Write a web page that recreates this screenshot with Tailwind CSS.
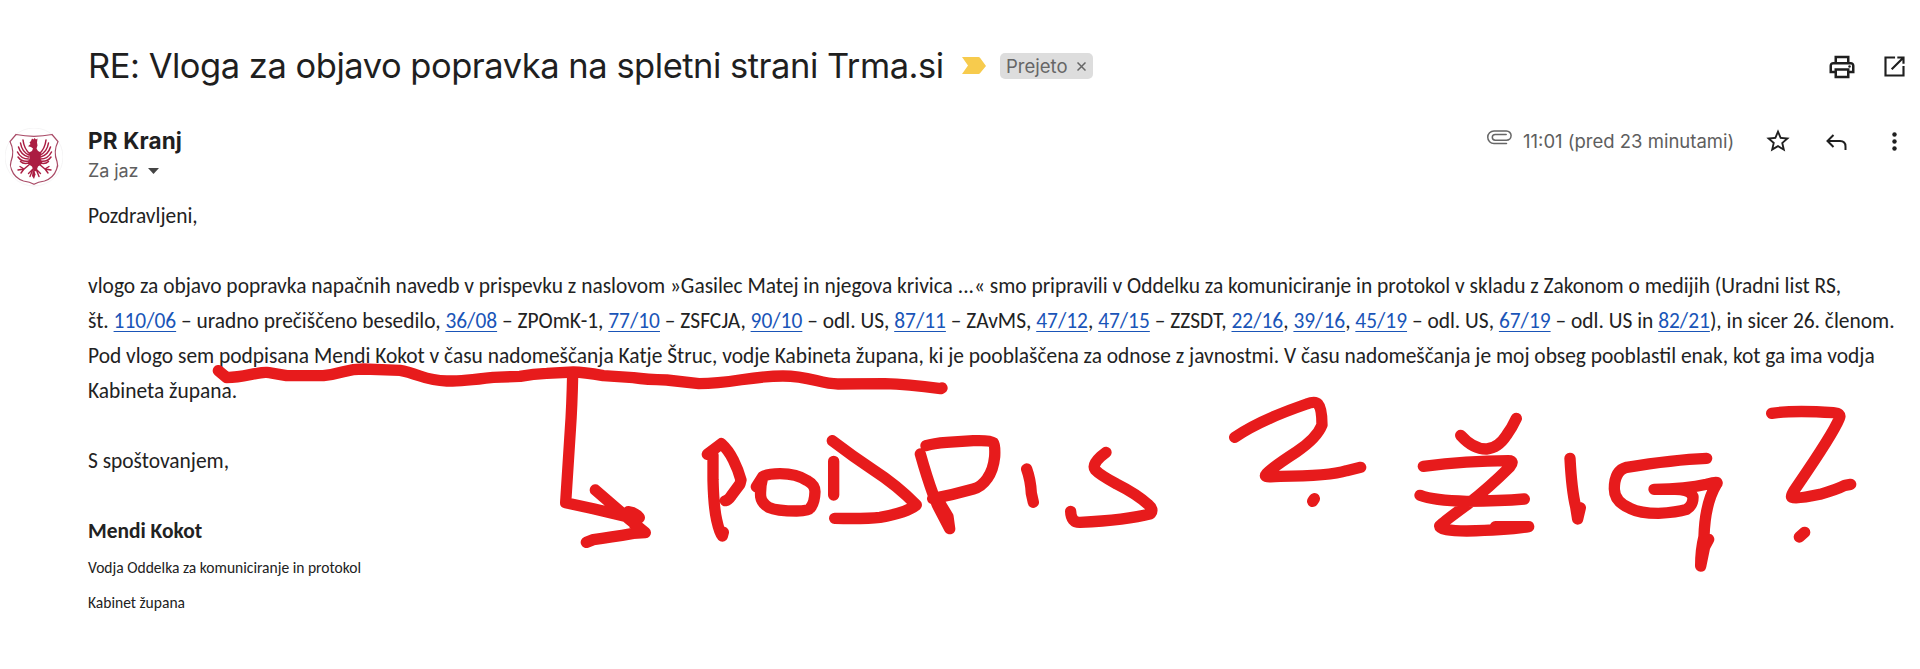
<!DOCTYPE html>
<html lang="sl">
<head>
<meta charset="utf-8">
<title>RE: Vloga za objavo popravka na spletni strani Trma.si</title>
<script src="https://cdn.jsdelivr.net/npm/@tailwindcss/browser@4"></script>
</head>
<body class="bg-white">
<main class="relative h-[669px] w-[1920px] overflow-hidden bg-white pt-[42px] font-[Inter,sans-serif] text-[#1f1f1f]">

  <header class="flex h-12 items-center pl-[88px] pr-[11px]">
    <h1 class="w-[874px] whitespace-nowrap text-[34.500px] leading-[48px] tracking-[-0.480px]">RE: Vloga za objavo popravka na spletni strani Trma.si</h1>
    <svg class="h-[18px] w-[24px]" viewBox="0 0 24 18" fill="#f7cb4d"><path d="M0 0h16.500q1 0 1.700.9L24 9l-5.800 7.100q-.7.900-1.700.9H0l6-8.500z"/></svg>
    <div class="ml-[14px] flex h-[26px] w-[93px] items-center rounded-[5px] bg-[#dddddd] pl-[6px] text-[18.500px] leading-[26px] text-[#666]">
      <span class="w-[71px]">Prejeto</span>
      <svg class="size-[9px]" viewBox="0 0 9 9" stroke="#666" stroke-width="1.500"><path d="M.5.5l8 8M8.500.5l-8 8"/></svg>
    </div>
    <div class="ml-auto flex items-center gap-[24px] pr-[1px]">
      <svg class="mt-[1px] size-[30px]" viewBox="0 0 24 24" fill="#1f1f1f"><path d="M19 8h-1V3H6v5H5c-1.660 0-3 1.340-3 3v6h4v4h12v-4h4v-6c0-1.660-1.340-3-3-3zM8 5h8v3H8V5zm8 12v2H8v-4h8v2zm2-2v-2H6v2H4v-4c0-.55.45-1 1-1h14c.55 0 1 .45 1 1v4h-2z"/><circle cx="18" cy="11.500" r="1"/></svg>
      <svg class="mt-[1px] size-[27px]" viewBox="0 0 24 24" fill="none" stroke="#1f1f1f" stroke-width="1.900"><path d="M12.500 4H4v16h16v-8.500M14.500 4H20v5.500M20 4L9.500 14.500"/></svg>
    </div>
  </header>

  <section class="flex h-[109px] pt-[38px]">
    <svg class="ml-[5px] h-[60px] w-[58px]" viewBox="5 130 58 60" fill="none">
      <circle cx="34" cy="159" r="29" stroke="#f3f1f2" stroke-width=".8"/>
      <path d="M16 136.500q18 3.600 36 0l6 7q-5 10-1 20 1.500 4-.5 8-3 8.500-12 11.500-6.500.8-10.500 3.200-4-2.400-10.500-3.200-9-3-12-11.500-2-4-.5-8 4-10-1-20z" stroke="#a94a66" stroke-width="1.200"/>
      <g fill="#ab1d42">
        <path d="M31 143l1-2.500 1.500 1 1-1.500 1.500 1.500 1.500-1-.5 4 .5 3-1 3 1.500 2.500 3 1.500-.5 6 2 5-4.500 3-1.500 4-1.500 1-1.500-1-1.500-4-4.500-3 2-5-.5-6 3-1.500 1-2.500-2-1.500-3-.8 2.500-2.200-1-1.500z"/>
        <path d="M34 171l1.500 5.500L34 181l-2-3 .5-4z"/>
      </g>
      <g stroke="#ab1d42" stroke-linecap="round" stroke-width="1.500">
        <path d="M30 156Q24 151 23 142M29 157Q22 154 20.500 145M28.500 159Q21 157 18.500 149M28.500 161Q21 161 17.500 154M29 163Q22 164.500 18 159M30 164.500Q24 167 20.500 163.500"/>
        <path d="M39 156Q45 151 46 142M40 157Q47 154 48.500 145M40.500 159Q48 157 50.500 149M40.500 161Q48 161 51.500 154M40 163Q47 164.500 51 159M39 164.500Q45 167 48.500 163.500"/>
        <path d="M30 166l-6 5-6 1M24 171l-3 4M24 171l-4-2.500M39 166l6 5 6 1M45 171l3 4M45 171l4-2.500" stroke-width="1.400"/>
        <path d="M33 171l-4.500 4.500M33 171l-3 7.500M36 171l4.500 4.500M36 171l3 7.500" stroke-width="1.400"/>
      </g>
    </svg>
    <div class="ml-[25px] flex flex-col">
      <div class="h-[29px] text-[22.500px] font-bold leading-[26px] tracking-[0.15px]">PR Kranj</div>
      <div class="flex items-center text-[18px] leading-[27px] text-[#5e5e5e]">
        <span class="w-[60px] tracking-[-0.1px]">Za jaz</span>
        <svg class="mt-[1px] h-[6px] w-[11px]" viewBox="0 0 11 6" fill="#444"><path d="M0 0h11L5.500 6z"/></svg>
      </div>
    </div>
    <div class="ml-auto flex h-[25px] items-center pr-[23px]">
      <svg class="mr-[11px] mb-[6px] h-[15px] w-[25px]" viewBox="0 0 25 15" fill="none" stroke="#666" stroke-width="1.500" stroke-linecap="round"><path d="M19.500 13.500H7a6.200 6.200 0 0 1 0-12.500h12.500a4.600 4.600 0 0 1 0 9.200H8.200a2.900 2.900 0 0 1 0-5.800h11"/></svg>
      <span class="w-[241px] whitespace-nowrap text-[18.500px] leading-[24px] text-[#5e5e5e]">11:01 (pred 23 minutami)</span>
      <svg class="size-[28px]" viewBox="0 0 24 24" fill="#1f1f1f"><path d="M22 9.240l-7.190-.62L12 2 9.190 8.630 2 9.240l5.460 4.730L5.820 21 12 17.270 18.180 21l-1.630-7.030L22 9.240zM12 15.400l-3.760 2.270 1-4.280-3.320-2.880 4.380-.38L12 6.100l1.710 4.040 4.380.38-3.320 2.880 1 4.280L12 15.400z"/></svg>
      <svg class="ml-[34px] mt-[2px] h-[16px] w-[21px]" viewBox="0 0 21 16" fill="none" stroke="#1f1f1f" stroke-width="2"><path d="M7.500 1L1.500 7l6 6M1.500 7H14q5.500 0 5.500 5.500V16"/></svg>
      <svg class="ml-[45px] mt-[1px] h-[19px] w-[5px]" viewBox="0 0 5 19" fill="#1f1f1f"><circle cx="2.500" cy="2.500" r="2.200"/><circle cx="2.500" cy="9.500" r="2.200"/><circle cx="2.500" cy="16.500" r="2.200"/></svg>
    </div>
  </section>

  <article class="whitespace-nowrap pl-[88px] font-[Calibri,Carlito,sans-serif] text-[21.430px] leading-[35px] text-[#222] [&_a]:text-[#1a55b8] [&_a]:underline [&_a]:decoration-1 [&_a]:underline-offset-[3px]">
    <p>Pozdravljeni,</p>
    <p>&nbsp;</p>
    <p>vlogo za objavo popravka napačnih navedb v prispevku z naslovom »Gasilec Matej in njegova krivica ...« smo pripravili v Oddelku za komuniciranje in protokol v skladu z Zakonom o medijih (Uradni list RS,<br>
    št. <a href="#">110/06</a> – uradno prečiščeno besedilo, <a href="#">36/08</a> – ZPOmK-1, <a href="#">77/10</a> – ZSFCJA, <a href="#">90/10</a> – odl. US, <a href="#">87/11</a> – ZAvMS, <a href="#">47/12</a>, <a href="#">47/15</a> – ZZSDT, <a href="#">22/16</a>, <a href="#">39/16</a>, <a href="#">45/19</a> – odl. US, <a href="#">67/19</a> – odl. US in <a href="#">82/21</a>), in sicer 26. členom.<br>
    Pod vlogo sem podpisana Mendi Kokot v času nadomeščanja Katje Štruc, vodje Kabineta župana, ki je pooblaščena za odnose z javnostmi. V času nadomeščanja je moj obseg pooblastil enak, kot ga ima vodja<br>
    Kabineta župana.</p>
    <p>&nbsp;</p>
    <p>S spoštovanjem,</p>
    <p>&nbsp;</p>
    <p class="font-bold">Mendi Kokot</p>
    <p class="pt-[1px] text-[15.550px]">Vodja Oddelka za komuniciranje in protokol</p>
    <p class="text-[15.550px]">Kabinet župana</p>
  </article>

  <!-- freehand marker annotations over the message -->
  <svg class="pointer-events-none absolute inset-0" width="1920" height="669" viewBox="0 0 1920 669" fill="none" stroke="#e71b1c" stroke-linecap="round" stroke-linejoin="round">
    <g transform="translate(200 340) scale(.33333)" stroke-width="34">
      <path d="M55 92L80 113Q110 112 150 104T200 97T260 107H370Q400 103 430 95T490 87L600 91Q620 94 660 108T740 123T880 112L960 109Q1000 101 1040 100L1120 96Q1150 96 1210 107L1300 113Q1340 119 1400 120L1497 131C1600 130 1650 108 1749 108C1830 108 1860 132 1914 132L2055 131Q2120 132 2222 146L2226 144"/>
      <path d="M1118 105Q1116 200 1111 270L1097 488L1180 506L1300 535M1186 450L1290 540L1336 578L1300 580Q1230 592 1180 599L1159 607M1285 515Q1305 517 1318 533L1300 550"/>
    </g>
    <g transform="translate(680 380) scale(.33333)" stroke-width="34">
      <path d="M82 223L124 191Q145 210 160 240T183 300L180 312L154 347Q145 360 136 362M99 225V300Q101 380 110 420T127 468L130 457"/>
      <path d="M229 320L248 290Q265 281 300 281Q350 281 382 302Q405 315 405 335Q404 370 390 385Q385 393 350 393Q290 393 266 382Q245 370 242 350Q240 320 248 292"/>
      <path d="M461 244V345M457 182Q520 230 580 270Q650 315 709 375Q680 398 600 412Q560 417 464 415"/>
      <path d="M721 222Q740 290 760 345L772 375L809 446L804 410L780 370M738 197Q760 190 800 187L880 182Q930 180 940 188Q946 195 944 230Q940 270 922 295Q905 320 880 327Q820 344 758 356"/>
      <path d="M1040 267Q1052 300 1054 340L1060 367M1278 217L1262 230Q1235 255 1246 270Q1260 285 1310 312Q1370 342 1405 374Q1422 388 1412 401Q1340 420 1200 427Q1173 428 1172 394"/>
    </g>
    <g transform="translate(1200 380) scale(.33333)" stroke-width="34">
      <path d="M104 172Q180 120 320 72Q345 62 354 72Q366 85 366 135Q350 175 290 215Q190 280 197 288Q200 292 240 289Q390 288 440 272L482 262M338 364L343 356" />
      <path d="M782 166Q820 208 860 207Q895 204 920 165Q935 145 949 115"/>
      <path d="M670 259Q800 243 925 242Q945 242 930 260Q870 320 800 375Q725 430 719 438Q720 452 800 453Q920 451 986 440H886M660 346Q700 362 800 364Q900 363 973 357"/>
    </g>
    <g transform="translate(1540 380) scale(.33333)" stroke-width="34">
      <path d="M90 235Q95 330 107 380L113 417L121 383"/>
      <path d="M500 235Q400 239 260 262Q223 272 223 327Q223 365 270 385Q300 400 355 400Q410 397 440 388Q460 375 459 350Q450 327 400 328H342Q440 327 500 313Q540 302 529 313Q495 370 492 470Q482 510 482 558L494 500L506 478"/>
      <path d="M695 100Q760 90 880 98Q905 100 898 115Q880 160 770 320Q750 348 756 352Q770 358 840 343Q890 329 915 316L932 313M778 471L794 457"/>
    </g>
  </svg>
</main>
</body>
</html>
